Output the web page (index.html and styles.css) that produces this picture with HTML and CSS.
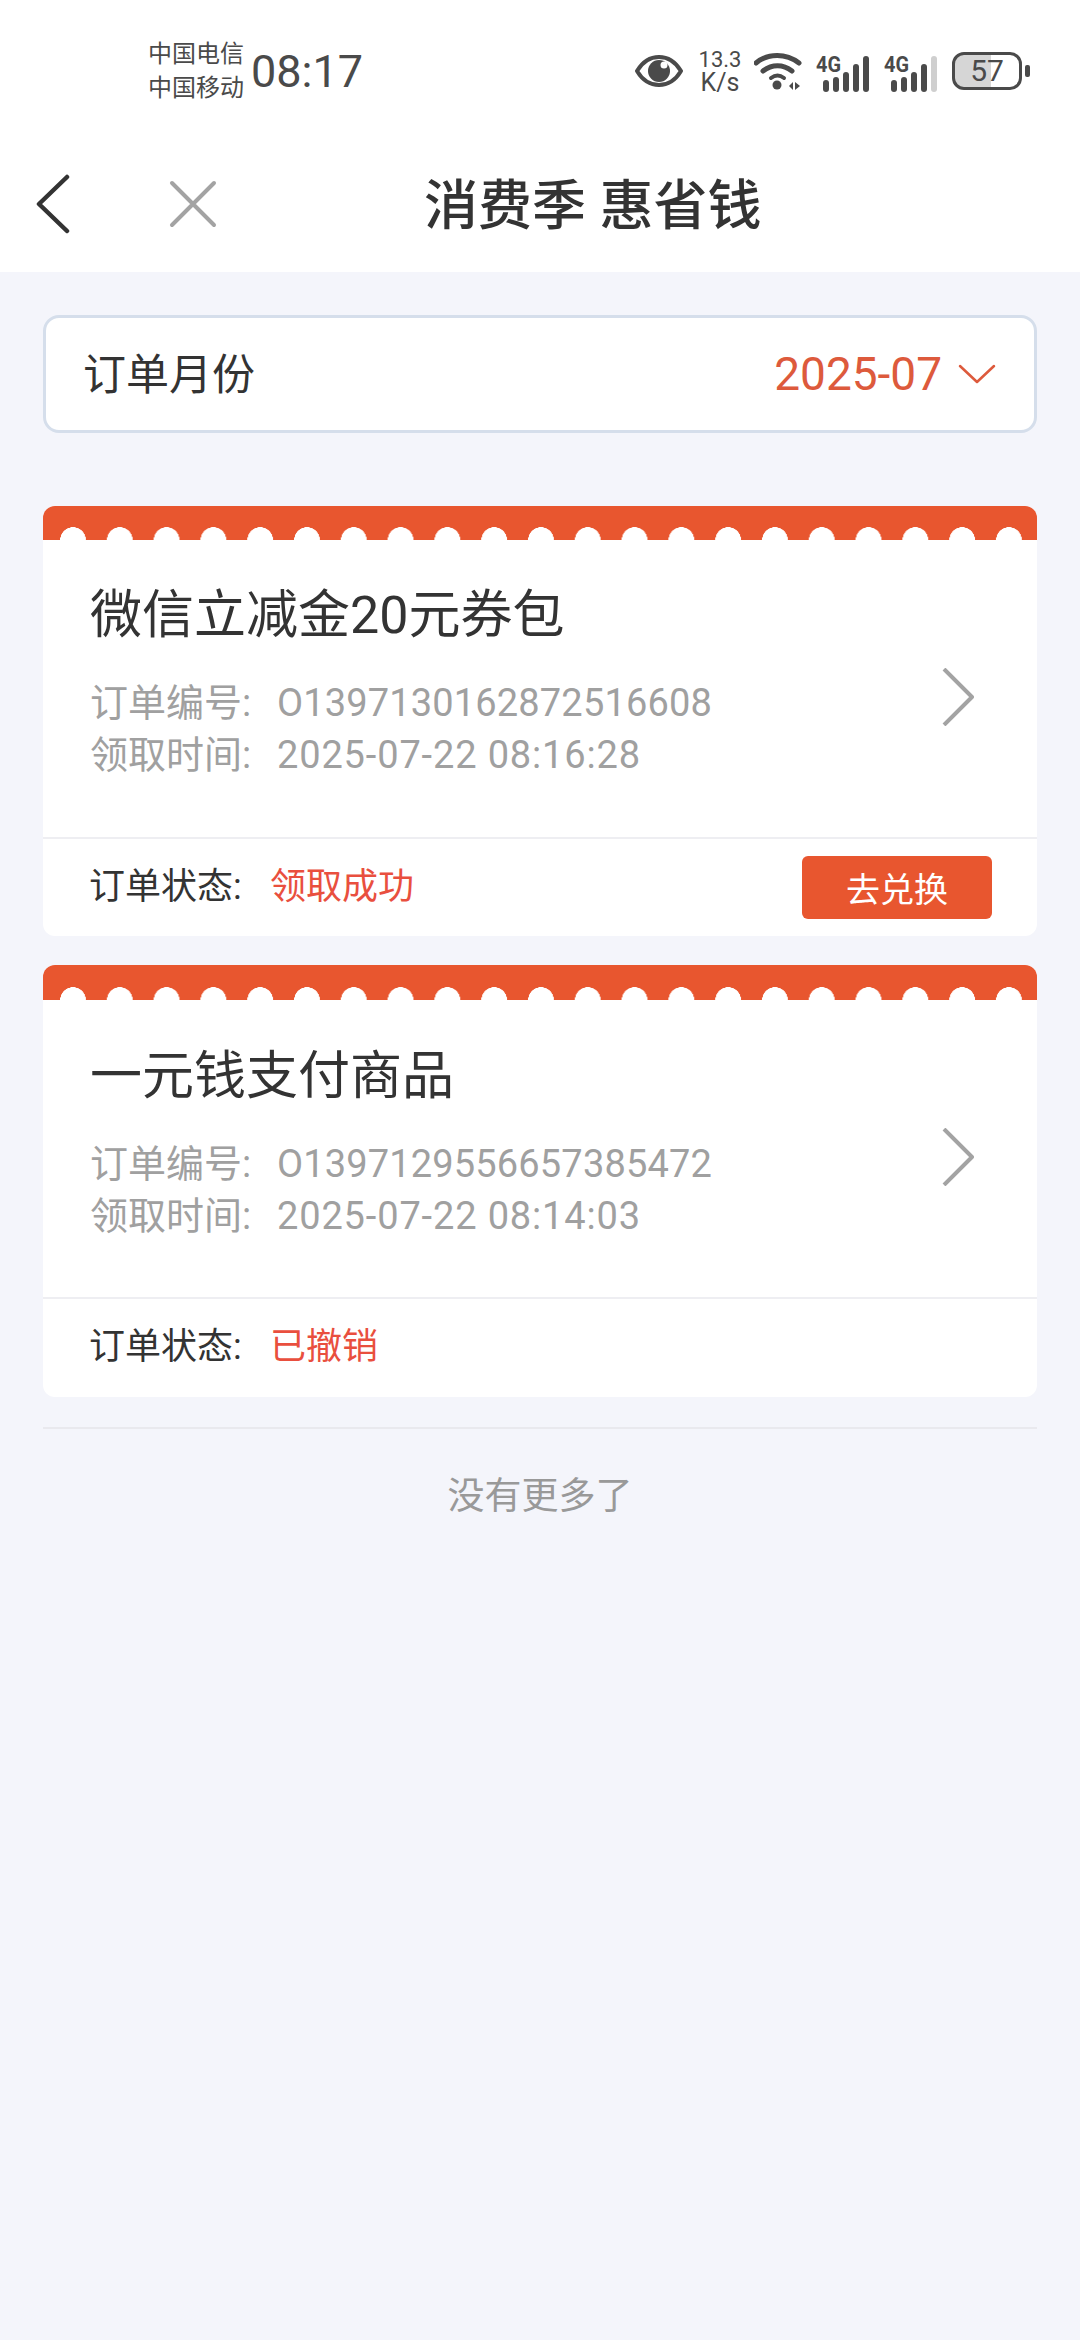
FILE: index.html
```html
<!DOCTYPE html>
<html lang="zh-CN">
<head>
  <meta charset="UTF-8">
  <meta name="viewport" content="width=device-width, initial-scale=1.0">
  <title>消费季 惠省钱</title>
  <link rel="stylesheet" href="styles.css">
</head>
<body>
  <div class="status-bar">
    <div class="carriers">
      <span>中国电信</span>
      <span>中国移动</span>
    </div>
    <div class="clock">08:17</div>
    <div class="status-icons">
      <svg class="eye" width="48" height="34" viewBox="0 0 48 34">
        <path d="M2 17C8 7 15 3 24 3s16 4 22 14c-6 10-13 14-22 14S8 27 2 17z" fill="none" stroke="#4a4a4a" stroke-width="4" stroke-linejoin="round"/>
        <circle cx="24" cy="17" r="11" fill="#4a4a4a"/>
        <circle cx="29" cy="11" r="3.5" fill="#fff"/>
      </svg>
      <div class="speed"><span>13.3</span><span class="speed-unit">K/s</span></div>
      <svg class="wifi" width="48" height="38" viewBox="0 0 48 38">
        <path d="M2 11C14 1 32 1 45 11" fill="none" stroke="#4a4a4a" stroke-width="5" stroke-linecap="round"/>
        <path d="M9 19c9-7 20-7 29 0" fill="none" stroke="#4a4a4a" stroke-width="5" stroke-linecap="round"/>
        <path d="M17 26c4-3 9-3 13 0" fill="none" stroke="#4a4a4a" stroke-width="4" stroke-linecap="round"/>
        <circle cx="23" cy="33" r="4.5" fill="#4a4a4a"/>
        <path d="M35 34l4-4v8zM41 30l5 4-5 4z" fill="#4a4a4a"/>
      </svg>
      <svg class="signal" width="53" height="44" viewBox="0 -6 53 44">
        <text class="net" x="0" y="17" textLength="25" lengthAdjust="spacingAndGlyphs">4G</text>
        <rect x="7" y="25" width="6" height="12" rx="3" fill="#4a4a4a"/>
        <rect x="17" y="22" width="6" height="15" rx="3" fill="#4a4a4a"/>
        <rect x="27" y="17" width="6" height="20" rx="3" fill="#4a4a4a"/>
        <rect x="37" y="9" width="6" height="28" rx="3" fill="#4a4a4a"/>
        <rect x="47" y="1" width="6" height="36" rx="3" fill="#4a4a4a"/>
      </svg>
      <svg class="signal" width="53" height="44" viewBox="0 -6 53 44">
        <text class="net" x="0" y="17" textLength="25" lengthAdjust="spacingAndGlyphs">4G</text>
        <rect x="7" y="25" width="6" height="12" rx="3" fill="#4a4a4a"/>
        <rect x="17" y="22" width="6" height="15" rx="3" fill="#4a4a4a"/>
        <rect x="27" y="17" width="6" height="20" rx="3" fill="#4a4a4a"/>
        <rect x="37" y="9" width="6" height="28" rx="3" fill="#4a4a4a"/>
        <rect x="47" y="1" width="6" height="36" rx="3" fill="#cfcfcf"/>
      </svg>
      <div class="battery">
        <div class="battery-body">57</div>
        <div class="battery-nub"></div>
      </div>
    </div>
  </div>

  <div class="nav">
    <svg class="nav-back" width="34" height="60" viewBox="0 0 34 60">
      <path d="M31 3L3 30l28 27" fill="none" stroke="#333" stroke-width="4.5" stroke-linecap="round" stroke-linejoin="round"/>
    </svg>
    <svg class="nav-close" width="48" height="48" viewBox="0 0 48 48">
      <path d="M3 3l42 42M45 3L3 45" fill="none" stroke="#a3a3a3" stroke-width="4" stroke-linecap="round"/>
    </svg>
    <div class="nav-title">消费季 惠省钱</div>
  </div>

  <div class="content">
    <div class="month-select">
      <span class="month-label">订单月份</span>
      <span class="month-value">2025-07</span>
      <svg class="month-arrow" width="38" height="20" viewBox="0 0 38 20">
        <path d="M2 2l17 16L36 2" fill="none" stroke="#dd5a3c" stroke-width="2.5" stroke-linecap="round" stroke-linejoin="round"/>
      </svg>
    </div>

    <div class="order-card">
      <div class="card-strip"></div>
      <div class="card-body">
        <div class="card-info">
          <div class="card-title">微信立减金20元券包</div>
          <div class="card-meta">
            <div class="meta-line"><span class="meta-key">订单编号:</span><span class="meta-no">O1397130162872516608</span></div>
            <div class="meta-line"><span class="meta-key">领取时间:</span><span class="meta-time">2025-07-22 08:16:28</span></div>
          </div>
        </div>
        <svg class="card-arrow" width="34" height="58" viewBox="0 0 34 58">
          <path d="M3 1l28 28L3 57" fill="none" stroke="#a3a3a3" stroke-width="4" stroke-linejoin="round"/>
        </svg>
      </div>
      <div class="card-footer">
        <span class="status-key">订单状态:</span>
        <span class="status-value">领取成功</span>
        <button class="redeem-btn">去兑换</button>
      </div>
    </div>

    <div class="order-card">
      <div class="card-strip"></div>
      <div class="card-body">
        <div class="card-info">
          <div class="card-title">一元钱支付商品</div>
          <div class="card-meta">
            <div class="meta-line"><span class="meta-key">订单编号:</span><span class="meta-no">O1397129556657385472</span></div>
            <div class="meta-line"><span class="meta-key">领取时间:</span><span class="meta-time">2025-07-22 08:14:03</span></div>
          </div>
        </div>
        <svg class="card-arrow" width="34" height="58" viewBox="0 0 34 58">
          <path d="M3 1l28 28L3 57" fill="none" stroke="#a3a3a3" stroke-width="4" stroke-linejoin="round"/>
        </svg>
      </div>
      <div class="card-footer">
        <span class="status-key">订单状态:</span>
        <span class="status-value">已撤销</span>
      </div>
    </div>

    <div class="list-end">没有更多了</div>
  </div>
</body>
</html>
```

FILE: styles.css
```css
* {
  box-sizing: border-box;
}
html, body {
  margin: 0;
}
body {
  width: 1080px;
  height: 2340px;
  overflow: hidden;
  background-color: #f4f5fb;
  font-family: Roboto, "Noto Sans CJK SC", sans-serif;
  color: #333;
}

/* status bar */
.status-bar {
  display: flex;
  align-items: center;
  height: 136px;
  padding: 6px 50px 0 148px;
  background-color: #fff;
  color: #4a4a4a;
}
.carriers {
  display: flex;
  flex-direction: column;
  font-size: 24px;
  line-height: 34px;
}
.clock {
  margin-left: 7px;
  font-size: 45px;
}
.status-icons {
  display: flex;
  align-items: center;
  margin-left: auto;
}
.eye {
  margin-right: 14px;
}
.speed {
  display: flex;
  flex-direction: column;
  align-items: center;
  width: 46px;
  margin-right: 11px;
  font-size: 22px;
  line-height: 23px;
}
.speed-unit {
  font-size: 25px;
}
.wifi {
  margin-right: 14px;
}
.signal {
  margin-right: 15px;
}
.net {
  font-family: Roboto, sans-serif;
  font-size: 22px;
  font-weight: 700;
  fill: #4a4a4a;
}
.battery {
  display: flex;
  align-items: center;
}
.battery-body {
  width: 70px;
  height: 38px;
  border: 3px solid #4a4a4a;
  border-radius: 12px;
  background: linear-gradient(90deg, #d6d6d6 57%, #fff 57%);
  font-size: 30px;
  line-height: 32px;
  text-align: center;
}
.battery-nub {
  width: 5px;
  height: 12px;
  margin-left: 3px;
  border-radius: 2px;
  background-color: #4a4a4a;
}

/* nav */
.nav {
  display: flex;
  align-items: center;
  height: 136px;
  background-color: #fff;
}
.nav-back {
  margin-left: 36px;
}
.nav-close {
  margin-left: 99px;
}
.nav-title {
  margin: 0 0 6px 207px;
  font-size: 54px;
  font-weight: 500;
  white-space: nowrap;
}

/* page */
.content {
  padding: 43px 43px 0;
}
.month-select {
  display: flex;
  align-items: center;
  height: 118px;
  padding: 0 38px 0 37px;
  border: 3px solid #d5deeb;
  border-radius: 16px;
  background-color: #fff;
  margin-bottom: 73px;
}
.month-label {
  margin-bottom: 7px;
  font-size: 43px;
}
.month-value {
  margin-left: auto;
  font-size: 46px;
  color: #dd5a3c;
}
.month-arrow {
  margin-left: 16px;
}

/* order cards */
.order-card {
  margin-bottom: 29px;
  border-radius: 12px;
  overflow: hidden;
  background-color: #fff;
}
.card-strip {
  height: 34px;
  background-color: #e8562f;
  background-image: radial-gradient(circle 13px at 13px 14px, #fff 97%, transparent 100%);
  background-position: 17px bottom;
  background-size: 46.8px 14px;
  background-repeat: repeat-x;
}
.card-body {
  display: flex;
  justify-content: space-between;
  height: 297px;
  padding: 50px 62px 0 47px;
}
.card-title {
  font-size: 52px;
  line-height: 52px;
}
.card-meta {
  margin-top: 35px;
  font-size: 38px;
  line-height: 52px;
  color: #a0a0a0;
}
.meta-key {
  display: inline-block;
  width: 187px;
}
.meta-no {
  letter-spacing: 0.15px;
}
.meta-time {
  letter-spacing: 0.85px;
}
.card-arrow {
  margin-top: 78px;
}
.card-footer {
  display: flex;
  align-items: center;
  height: 99px;
  padding: 0 45px 0 46px;
  border-top: 2px solid #eeeef2;
  font-size: 36px;
}
.status-key {
  width: 181px;
  margin-bottom: 10px;
}
.status-value {
  margin-bottom: 10px;
  color: #e94f3e;
}
.redeem-btn {
  margin-left: auto;
  width: 190px;
  height: 63px;
  border: none;
  border-radius: 6px;
  background-color: #e8562f;
  color: #fff;
  font-family: inherit;
  font-size: 34px;
  cursor: pointer;
}

/* second card sits a pixel or two lower inside */
.order-card + .order-card .card-strip {
  height: 35px;
}
.order-card + .order-card .card-body {
  padding-top: 51px;
}
.order-card + .order-card .card-arrow {
  margin-top: 77px;
}
.order-card + .order-card .card-footer {
  height: 100px;
}

.list-end {
  margin-top: 30px;
  padding-top: 46px;
  border-top: 2px solid #e9e9ee;
  font-size: 37px;
  line-height: 44px;
  text-align: center;
  color: #999;
}
```
